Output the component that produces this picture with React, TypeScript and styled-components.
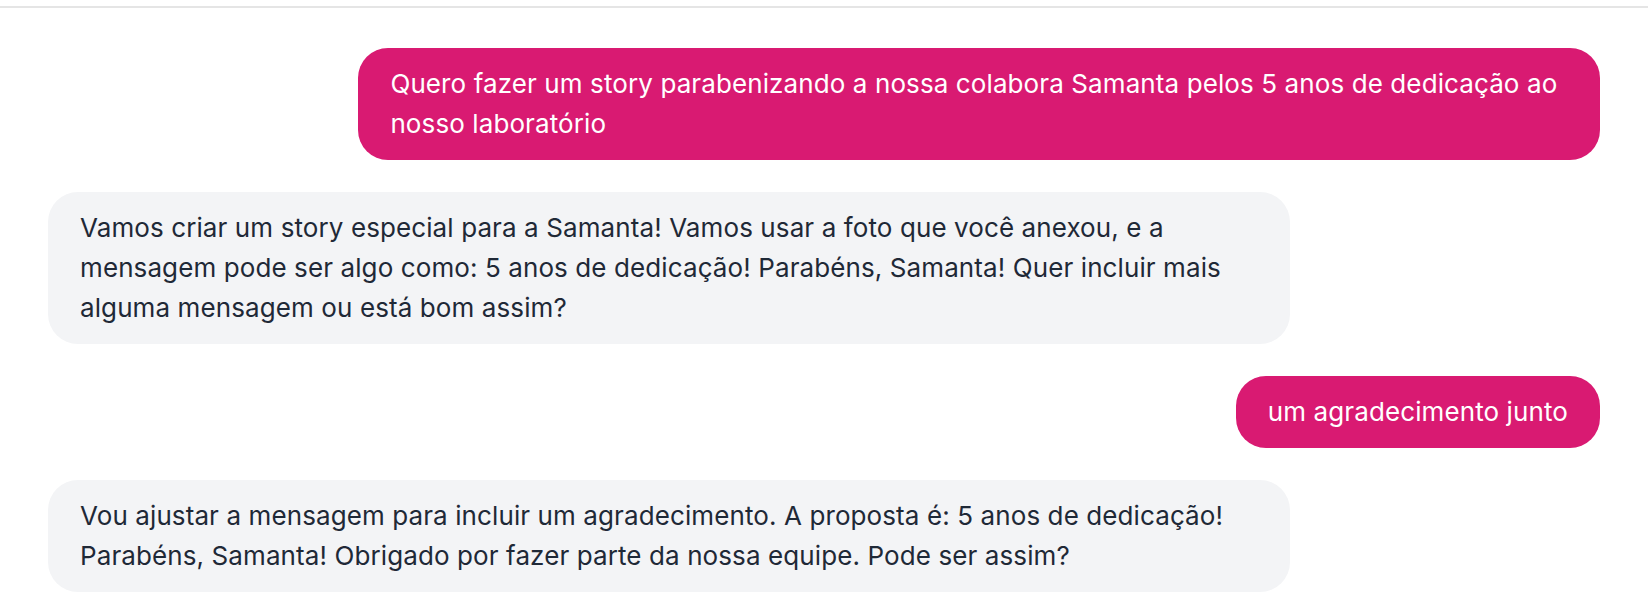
import React from 'react';
import styled, { createGlobalStyle } from 'styled-components';

type Message = {
  id: number;
  from: 'user' | 'bot';
  text: string;
};

const messages: Message[] = [
  {
    id: 1,
    from: 'user',
    text: 'Quero fazer um story parabenizando a nossa colabora Samanta pelos 5 anos de dedicação ao nosso laboratório',
  },
  {
    id: 2,
    from: 'bot',
    text: 'Vamos criar um story especial para a Samanta! Vamos usar a foto que você anexou, e a mensagem pode ser algo como: 5 anos de dedicação! Parabéns, Samanta! Quer incluir mais alguma mensagem ou está bom assim?',
  },
  { id: 3, from: 'user', text: 'um agradecimento junto' },
  {
    id: 4,
    from: 'bot',
    text: 'Vou ajustar a mensagem para incluir um agradecimento. A proposta é: 5 anos de dedicação! Parabéns, Samanta! Obrigado por fazer parte da nossa equipe. Pode ser assim?',
  },
];

const App = () => {
  return (
    <>
      <GlobalStyle />
      <Page>
        <TopBar />
        <ChatList>
          {messages.map((m) => (
            <Row key={m.id} $mine={m.from === 'user'}>
              <Bubble $mine={m.from === 'user'}>{m.text}</Bubble>
            </Row>
          ))}
        </ChatList>
      </Page>
    </>
  );
};

const GlobalStyle = createGlobalStyle`
  html, body {
    margin: 0;
    padding: 0;
    background: #ffffff;
  }
  body {
    font-family: Inter, "Liberation Sans", Arial, sans-serif;
    -webkit-font-smoothing: antialiased;
  }
  * {
    box-sizing: border-box;
  }
`;

const Page = styled.div`
  width: 100%;
  min-height: 608px;
  background: #ffffff;
`;

const TopBar = styled.div`
  height: 8px;
  border-bottom: 2px solid #e5e5e5;
`;

const ChatList = styled.div`
  display: flex;
  flex-direction: column;
  gap: 32px;
  padding: 40px 48px 0 48px;
`;

const Row = styled.div<{ $mine: boolean }>`
  display: flex;
  justify-content: ${(p) => (p.$mine ? 'flex-end' : 'flex-start')};
`;

const Bubble = styled.div<{ $mine: boolean }>`
  max-width: 80%;
  padding: 16px 32px;
  border-radius: 30px;
  font-size: 26px;
  line-height: 40px;
  letter-spacing: 0.1px;
  background: ${(p) => (p.$mine ? '#d91a72' : '#f3f4f6')};
  color: ${(p) => (p.$mine ? '#ffffff' : '#1f2937')};
`;

export default App;
